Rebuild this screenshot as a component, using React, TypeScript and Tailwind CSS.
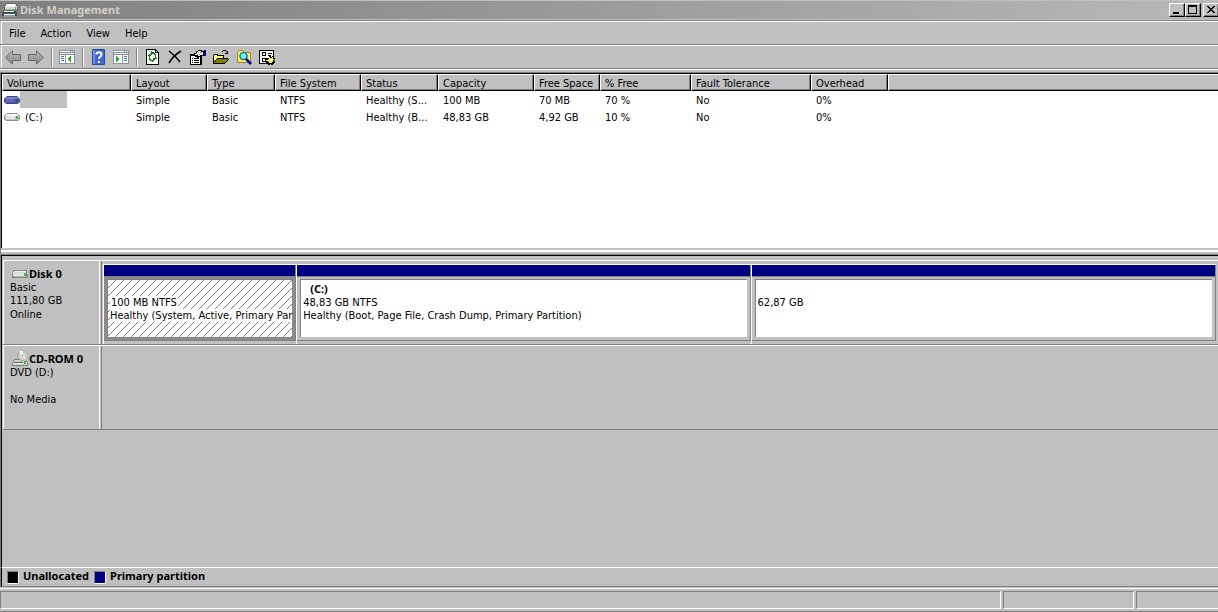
import React from "react";

const columns = [
  { name: "Volume", width: "w-[129px]" },
  { name: "Layout", width: "w-[76px]" },
  { name: "Type", width: "w-[68px]" },
  { name: "File System", width: "w-[86px]" },
  { name: "Status", width: "w-[77px]" },
  { name: "Capacity", width: "w-[96px]" },
  { name: "Free Space", width: "w-[66px]" },
  { name: "% Free", width: "w-[91px]" },
  { name: "Fault Tolerance", width: "w-[120px]" },
  { name: "Overhead", width: "w-[77px]" },
];

const volumes = [
  ["", "Simple", "Basic", "NTFS", "Healthy (S...", "100 MB", "70 MB", "70 %", "No", "0%"],
  ["(C:)", "Simple", "Basic", "NTFS", "Healthy (B...", "48,83 GB", "4,92 GB", "10 %", "No", "0%"],
];

const DriveIcon = ({ selected = false }: { selected?: boolean }) => (
  <svg width="16" height="8" viewBox="0 0 16 8" className="shrink-0">
    <path
      d="M3 .5h10l2.500 2.500v3L14 7.500H2L.5 6V3z"
      fill={selected ? "#5454a8" : "#c4c4c4"}
      stroke={selected ? "#46468c" : "#8c8c8c"}
    />
    <path d="M3 1h10l1.500 2h-13z" fill={selected ? "#7c7cc0" : "#f6f6f6"} />
    <path d="M2 3h9v3H2z" fill={selected ? "#6464b4" : "#e6e6e6"} />
    <path d="M12 3h2v3h-2z" fill={selected ? "#186050" : "#35b52a"} />
  </svg>
);

const DiskIcon = () => (
  <svg width="16" height="8" viewBox="0 0 16 8" shapeRendering="crispEdges">
    <path d="M1 0h14l1 7v1H0V7z" fill="#858585" />
    <path d="M2 1h12v1H2z" fill="#f4f4f4" />
    <path d="M1 2h13v1H1z" fill="#d4d4d4" />
    <path d="M1 3h11v3H1z" fill="#e2e2e2" />
    <path d="M2 6h12v1H2z" fill="#b4b4b4" />
    <path d="M12 3h2v3h-2z" fill="#35c52a" />
  </svg>
);

const CdIcon = () => (
  <svg width="16" height="16" viewBox="0 0 16 16">
    <path d="M2.500 9.500h11l2 3v3H.5v-3z" fill="#d2d2d2" stroke="#808080" />
    <circle cx="10.500" cy="5.500" r="5" fill="#d0d0d0" stroke="#a0a0a0" />
    <path d="M10.500 5.500 7 1.500l3-1z" fill="#fff" />
    <path d="m10.500 5.500 4.500 2-2 2.500z" fill="#f3d9e4" />
    <path d="m10.500 5.500 3.500-3.500 1.500 3z" fill="#b4dfb4" />
    <circle cx="10.500" cy="5.500" r="1.500" fill="#999" stroke="#fff" />
    <path d="M2 12h9v1H2z" fill="#555" />
    <path d="M2 13h9v1H2z" fill="#f4f4f4" />
    <path d="M12 11h2v3h-2z" fill="#35c52a" />
  </svg>
);

const AppIcon = () => (
  <svg width="16" height="16" viewBox="0 0 16 16">
    <path d="M5 1.500h8l2.500 3V8h-13V4.500z" fill="#dadada" stroke="#686868" />
    <path d="M5 2h8l1.500 2.500h-11z" fill="#fff" />
    <path d="M13 5h1v3h-1z" fill="#22d022" />
    <path d="M1 9h13l1 2v3h-2v-2H2v2H0v-3z" fill="#3f5254" />
    <path d="M2 9h10v1H2z" fill="#dfeeee" />
    <path d="M2 12h11v1H2z" fill="#e9f4f4" />
    <path d="M2 13h11v2H2z" fill="#8f9c9c" />
  </svg>
);

const ArrowIcon = ({ forward = false }: { forward?: boolean }) => (
  <svg width="16" height="15" viewBox="0 0 16 15" className={forward ? "rotate-180" : ""}>
    <defs>
      <linearGradient id={forward ? "arrowRight" : "arrowLeft"} x2="0" y2="1">
        <stop stopColor={forward ? "#888" : "#bbb"} />
        <stop offset="1" stopColor={forward ? "#bbb" : "#888"} />
      </linearGradient>
    </defs>
    <path
      d="M.7 7.500 7.500.8v3.700h8v6h-8v3.700z"
      fill={forward ? "url(#arrowRight)" : "url(#arrowLeft)"}
      stroke="#686868"
      strokeLinejoin="round"
    />
  </svg>
);

const PaneIcon = ({ right = false }: { right?: boolean }) => (
  <svg width="16" height="14" viewBox="0 0 16 14" shapeRendering="crispEdges">
    <path d="M0 0h16v14H0z" fill="#8b939b" />
    <path d="M1 1h10v1H1zM12 1h1v1h-1zM14 1h1v1h-1z" fill="#fff" />
    <path d="M1 3h14v1H1z" fill="#e4e8ec" />
    {right ? (
      <>
        <path d="M1 5h8v8H1zM10 5h5v8h-5z" fill="#fff" />
        <path d="M3 6h1v6H3zM4 7h1v4H4zM5 8h1v2H5z" fill="#1fae1f" />
        <path d="M11 6h3v1h-3zM11 8h3v1h-3zM11 10h3v1h-3z" fill="#4a76b8" />
      </>
    ) : (
      <>
        <path d="M1 5h5v8H1zM7 5h8v8H7z" fill="#fff" />
        <path d="M2 6h3v1H2zM2 8h3v1H2zM2 10h3v1H2z" fill="#4a76b8" />
        <path d="M11 6h1v6h-1zM10 7h1v4h-1zM9 8h1v2H9z" fill="#1fae1f" />
      </>
    )}
  </svg>
);

const HelpIcon = () => (
  <svg width="13" height="16" viewBox="0 0 13 16">
    <path d="M.5.5h12v15H.5z" fill="#3f68d0" stroke="#2746a0" />
    <path d="M1 1h2v14H1z" fill="#6d91e4" />
    <path d="M4.500 5.500c0-3 5-3 5 0 0 2-2.500 2-2.500 4.500" fill="none" stroke="#fff" strokeWidth="2" />
    <path d="M6 12h2v2H6z" fill="#fff" />
  </svg>
);

const RefreshIcon = () => (
  <svg width="13" height="16" viewBox="0 0 13 16" shapeRendering="crispEdges">
    <path d="M0 0h10v1h1v1h1v1h1v13H0z" fill="#000" />
    <path d="M1 1h8v3h3v11H1z" fill="#fff" />
    <path d="M10 2h1v1h-1z" fill="#fff" />
    <path d="M5 2h1v1h2v1h1v1h1v3H9V6H8V5H6v1H5V5H4V4h1zM3 5h1v3H3zM2 6h3v1H2z" fill="#087808" />
    <path d="M7 9h1v1h1v1h-1v1H7v1H6v-1H4v-1H3V8h1v2h1v1h2zM9 8h1v2H9zM8 9h3v1H8z" fill="#087808" />
  </svg>
);

const DeleteIcon = () => (
  <svg width="14" height="14" viewBox="0 0 14 14">
    <path d="M1 1c4 3 8 7 11 11M13 1C8 4 4 8 1 13" fill="none" stroke="#000" strokeWidth="1.500" />
  </svg>
);

const PropertiesIcon = () => (
  <svg width="16" height="15" viewBox="0 0 16 15" shapeRendering="crispEdges">
    <path d="M0 4h12v11H0z" fill="#000" />
    <path d="M1 6h9v8H1z" fill="#fff" />
    <path d="M2 8h1v1H2zM4 8h5v1H4zM2 10h1v1H2zM4 10h5v1H4zM2 12h1v1H2zM4 12h5v1H4z" fill="#000" />
    <path d="M3 4h1V3h2V1h2V0h4v1h2v5h-3v1H9v1H7V7H5V6H3z" fill="#000" />
    <path d="M5 4h2V2h1V1h3v1h2v3h-3v1H8V5H5z" fill="#fff" />
    <path d="M6 3h1v1H6zM8 2h1v1H8zM7 4h1v1H7zM10 2h1v1h-1zM9 4h1v1H9zM11 3h1v1h-1z" fill="#777" />
    <path d="M14 0h2v6h-2z" fill="#000080" />
  </svg>
);

const OpenIcon = () => (
  <svg width="16" height="14" viewBox="0 0 16 14" shapeRendering="crispEdges">
    <path d="M1 4h4v1h6v3h4v1h1l-4 5H0V5h1z" fill="#000" />
    <path d="M1 5h3v1h6v2H4L1 12z" fill="#ffff70" />
    <path d="M4 9h11l-3 4H1z" fill="#808000" />
    <path d="M9 1h1v1H9zM10 0h3v1h-3zM13 1h1v1h-1zM14 1h1v3h-3V3h2z" fill="#000" />
  </svg>
);

const SearchIcon = () => (
  <svg width="15" height="15" viewBox="0 0 15 15">
    <path d="M.5 2.500 2 .5h4l1.500 2h6v10H.5z" fill="#ffec62" stroke="#9a8b20" />
    <circle cx="6.500" cy="6" r="3.500" fill="#77f3f5" stroke="#118090" strokeWidth="1.500" />
    <path d="m9 9 5 5" stroke="#0000b0" strokeWidth="2.500" />
  </svg>
);

const SettingsIcon = () => (
  <svg width="16" height="15" viewBox="0 0 16 15" shapeRendering="crispEdges">
    <path d="M0 0h15v14H0z" fill="#000" />
    <path d="M1 1h13v12H1z" fill="#fff" />
    <path d="M3 2h4v4H3zM3 8h4v4H3zM9 3h4v1H9zM9 5h3v1H9z" fill="#000" />
    <path d="M4 3h2v2H4zM4 9h2v2H4z" fill="#fff" />
    <path d="M10 6h2v1h1V6h2v2h1v2h-1v1h1v2h-2v2h-2v-1h-1v1H9v-2H7v-2h1v-1H7V8h3z" fill="#000" />
    <path d="M10 7h1v1h2V7h1v2h1v1h-1v2h-1v1h-3v-1H9v-1H8v-1h1V9h1z" fill="#ffe640" />
    <path d="M11 9h2v2h-2z" fill="#fff" />
  </svg>
);

const Separator = () => (
  <span className="mx-[3px] h-[18px] w-[2px] border-l border-l-[#808080] border-r border-r-white" />
);

const ToolButton = ({ label, children }: { label: string; children: React.ReactNode }) => (
  <button type="button" aria-label={label} className="flex h-[22px] w-[23px] items-center justify-center pr-px">
    {children}
  </button>
);

const WindowButton = ({ label, children }: { label: string; children: React.ReactNode }) => (
  <button
    type="button"
    aria-label={label}
    className="flex h-[14px] w-[16px] items-center justify-center border border-l-white border-t-white border-r-black border-b-black bg-[#c0c0c0] shadow-[inset_-1px_-1px_0_#808080]"
  >
    {children}
  </button>
);

const Partition = ({ selected = false, children }: { selected?: boolean; children?: React.ReactNode }) => (
  <div className="flex min-w-0 flex-col border-t border-l border-white">
    <div className="h-[12px] border-r border-b border-[#808080] bg-[#000080]" />
    <div
      className={`h-[64px] border-r border-b border-[#808080] px-[3px] pt-[2px] pb-[3px] ${
        selected ? "bg-[#8b8b8b]" : "bg-[#c0c0c0]"
      }`}
    >
      <div
        className={`h-full whitespace-nowrap border-t border-l border-[#808080] bg-white pt-[3px] pl-[2px] leading-[13px] ${
          selected
            ? "bg-[linear-gradient(135deg,transparent_45%,#808080_45%,#808080_55%,transparent_55%)] bg-[size:8px_8px]"
            : ""
        }`}
      >
        {children}
      </div>
    </div>
  </div>
);

const App = () => {
  return (
    <div className="flex min-h-screen flex-col overflow-hidden bg-[#c0c0c0] font-['DejaVu_Sans_Condensed','Noto_Sans',sans-serif] text-[11px] leading-[13px] text-black">
      <header className="flex h-[20px] items-center border-y border-[#c0c0c0] bg-linear-to-r from-[#808080] to-[#b8b8b8] pl-[2px]">
        <AppIcon />
        <h1 className="ml-[2px] flex-1 pb-[2px] font-['Noto_Sans',sans-serif] font-bold text-[#d4d0c8]">Disk Management</h1>
        <div className="-mr-px flex">
          <WindowButton label="Minimize">
            <svg width="12" height="10" shapeRendering="crispEdges">
              <path d="M2 7h6v2H2z" />
            </svg>
          </WindowButton>
          <WindowButton label="Maximize">
            <svg width="12" height="10" shapeRendering="crispEdges">
              <path d="M1 0h9v9H1zM2 2v6h7V2z" fillRule="evenodd" />
            </svg>
          </WindowButton>
          <span className="w-[2px]" />
          <WindowButton label="Close">
            <svg width="12" height="10" shapeRendering="crispEdges">
              <path d="M2 1h2v1h1v1h2V2h1V1h2v1H9v1H8v1H7v1h1v1h1v1h1v1H8V7H7V6H5v1H4v1H2V7h1V6h1V5h1V4H4V3H3V2H2z" />
            </svg>
          </WindowButton>
        </div>
      </header>

      <div className="border-t border-[#808080]">
        <nav className="ml-px flex h-[23px] items-center border-t border-l border-white">
          <button type="button" className="ml-[7px]">File</button>
          <button type="button" className="ml-[15px]">Action</button>
          <button type="button" className="ml-[15px]">View</button>
          <button type="button" className="ml-[15px]">Help</button>
        </nav>
      </div>

      <div className="border-y border-t-[#808080] border-b-[#808080]">
        <div className="ml-px flex h-[23px] items-center border-t border-l border-white">
          <ToolButton label="Back"><ArrowIcon /></ToolButton>
          <ToolButton label="Forward"><ArrowIcon forward /></ToolButton>
          <Separator />
          <ToolButton label="Show/Hide Console Tree"><PaneIcon /></ToolButton>
          <Separator />
          <ToolButton label="Help"><HelpIcon /></ToolButton>
          <ToolButton label="Show/Hide Action Pane"><PaneIcon right /></ToolButton>
          <Separator />
          <ToolButton label="Refresh"><RefreshIcon /></ToolButton>
          <ToolButton label="Delete"><DeleteIcon /></ToolButton>
          <ToolButton label="Properties"><PropertiesIcon /></ToolButton>
          <ToolButton label="Open"><OpenIcon /></ToolButton>
          <ToolButton label="Find"><SearchIcon /></ToolButton>
          <ToolButton label="Settings"><SettingsIcon /></ToolButton>
        </div>
      </div>

      <main className="flex flex-1 flex-col border-t border-white pt-[2px]">
        <div className="flex flex-1 flex-col border-t border-l border-[#808080]">
          <section className="h-[175px] border-t border-l border-black bg-white">
            <table className="w-full table-fixed border-separate border-spacing-0 text-left">
              <thead>
                <tr>
                  {columns.map((c) => (
                    <th
                      key={c.name}
                      className={`${c.width} h-[17px] border border-t-white border-l-white border-r-black border-b-black bg-[#c0c0c0] p-0 pt-[2px] pl-[4px] font-normal leading-[13px] whitespace-nowrap shadow-[inset_-1px_-1px_0_#808080]`}
                    >
                      {c.name}
                    </th>
                  ))}
                  <th className="h-[17px] border-y border-l border-t-white border-l-white border-b-black bg-[#c0c0c0] p-0 shadow-[inset_0_-1px_0_#808080]" />
                </tr>
              </thead>
              <tbody>
                {volumes.map((row, i) => (
                  <tr key={i}>
                    {row.map((cell, j) => (
                      <td key={j} className={`h-[17px] p-0 pl-[5px] whitespace-nowrap ${j === 0 ? "" : "pt-[2px]"}`}>
                        {j === 0 ? (
                          <div className="-ml-[3px] flex h-[17px] items-center">
                            <DriveIcon selected={i === 0} />
                            {cell ? (
                              <span className="ml-[5px] pt-[2px]">{cell}</span>
                            ) : (
                              <span className="h-[17px] w-[47px] bg-[#c0c0c0]" />
                            )}
                          </div>
                        ) : (
                          cell
                        )}
                      </td>
                    ))}
                    <td className="p-0" />
                  </tr>
                ))}
              </tbody>
            </table>
          </section>

          <div className="h-[6px] border-t-2 border-b-2 border-[#c0c0c0] bg-white" />

          <section className="flex flex-1 flex-col border-t border-[#808080]">
            <div className="flex flex-1 flex-col border-t border-l border-black pt-[4px] pl-px">
              <div className="flex h-[85px] border-t border-b border-t-white border-b-[#808080]">
                <div className="w-[97px] shrink-0 border-x border-white pt-[6px] pl-[6px]">
                  <h2 className="flex items-center gap-px pl-[2px] font-['Noto_Sans',sans-serif] font-bold">
                    <DiskIcon />
                    Disk 0
                  </h2>
                  <p className="mt-px">Basic</p>
                  <p>111,80 GB</p>
                  <p className="mt-px">Online</p>
                </div>
                <div className="ml-px grid flex-1 grid-cols-[193fr_454fr_465fr] border-l border-[#808080] pt-[3px] pr-[2px] pl-px">
                  <Partition selected>
                    <p className="h-[13px]" />
                    <p><span className="bg-white px-px">100 MB NTFS</span></p>
                    <p><span className="bg-white">Healthy (System, Active, Primary Par</span></p>
                  </Partition>
                  <Partition>
                    <p className="-mt-px mb-px pl-[7px] font-['Noto_Sans',sans-serif] font-bold">(C:)</p>
                    <p>48,83 GB NTFS</p>
                    <p>Healthy (Boot, Page File, Crash Dump, Primary Partition)</p>
                  </Partition>
                  <Partition>
                    <p className="h-[13px]" />
                    <p>62,87 GB</p>
                  </Partition>
                </div>
              </div>

              <div className="flex h-[85px] border-t border-b border-t-white border-b-[#808080]">
                <div className="w-[97px] shrink-0 border-x border-white pt-[3px] pl-[6px]">
                  <h2 className="flex h-[17px] items-end gap-px pl-[2px] font-['Noto_Sans',sans-serif] font-bold">
                    <CdIcon />
                    <span className="pb-px">CD-ROM 0</span>
                  </h2>
                  <p>DVD (D:)</p>
                  <p className="mt-[14px]">No Media</p>
                </div>
                <div className="ml-px flex-1 border-l border-[#808080]" />
              </div>
            </div>
            <footer className="flex h-[20px] items-center border-y border-t-white border-b-[#808080] border-l border-l-black pl-[5px] font-['Noto_Sans',sans-serif] font-bold">
              <span className="h-[13px] w-[12px] border border-t-[#808080] border-l-[#808080] border-r-white border-b-white bg-black" />
              <span className="ml-[4px] pb-[3px]">Unallocated</span>
              <span className="ml-[5px] h-[13px] w-[12px] border border-t-[#808080] border-l-[#808080] border-r-white border-b-white bg-[#000080]" />
              <span className="ml-[4px] pb-[3px]">Primary partition</span>
            </footer>
          </section>
        </div>
      </main>

      <div className="mt-px flex h-[24px] gap-[2px] border-t border-b border-t-white border-b-[#808080] pt-[2px] pb-[2px]">
        <div className="flex-1 border border-t-[#808080] border-l-[#808080] border-r-white border-b-white" />
        <div className="w-[131px] border border-t-[#808080] border-l-[#808080] border-r-white border-b-white" />
        <div className="w-[82px] border-y border-l border-t-[#808080] border-l-[#808080] border-b-white" />
      </div>
    </div>
  );
};

export default App;
